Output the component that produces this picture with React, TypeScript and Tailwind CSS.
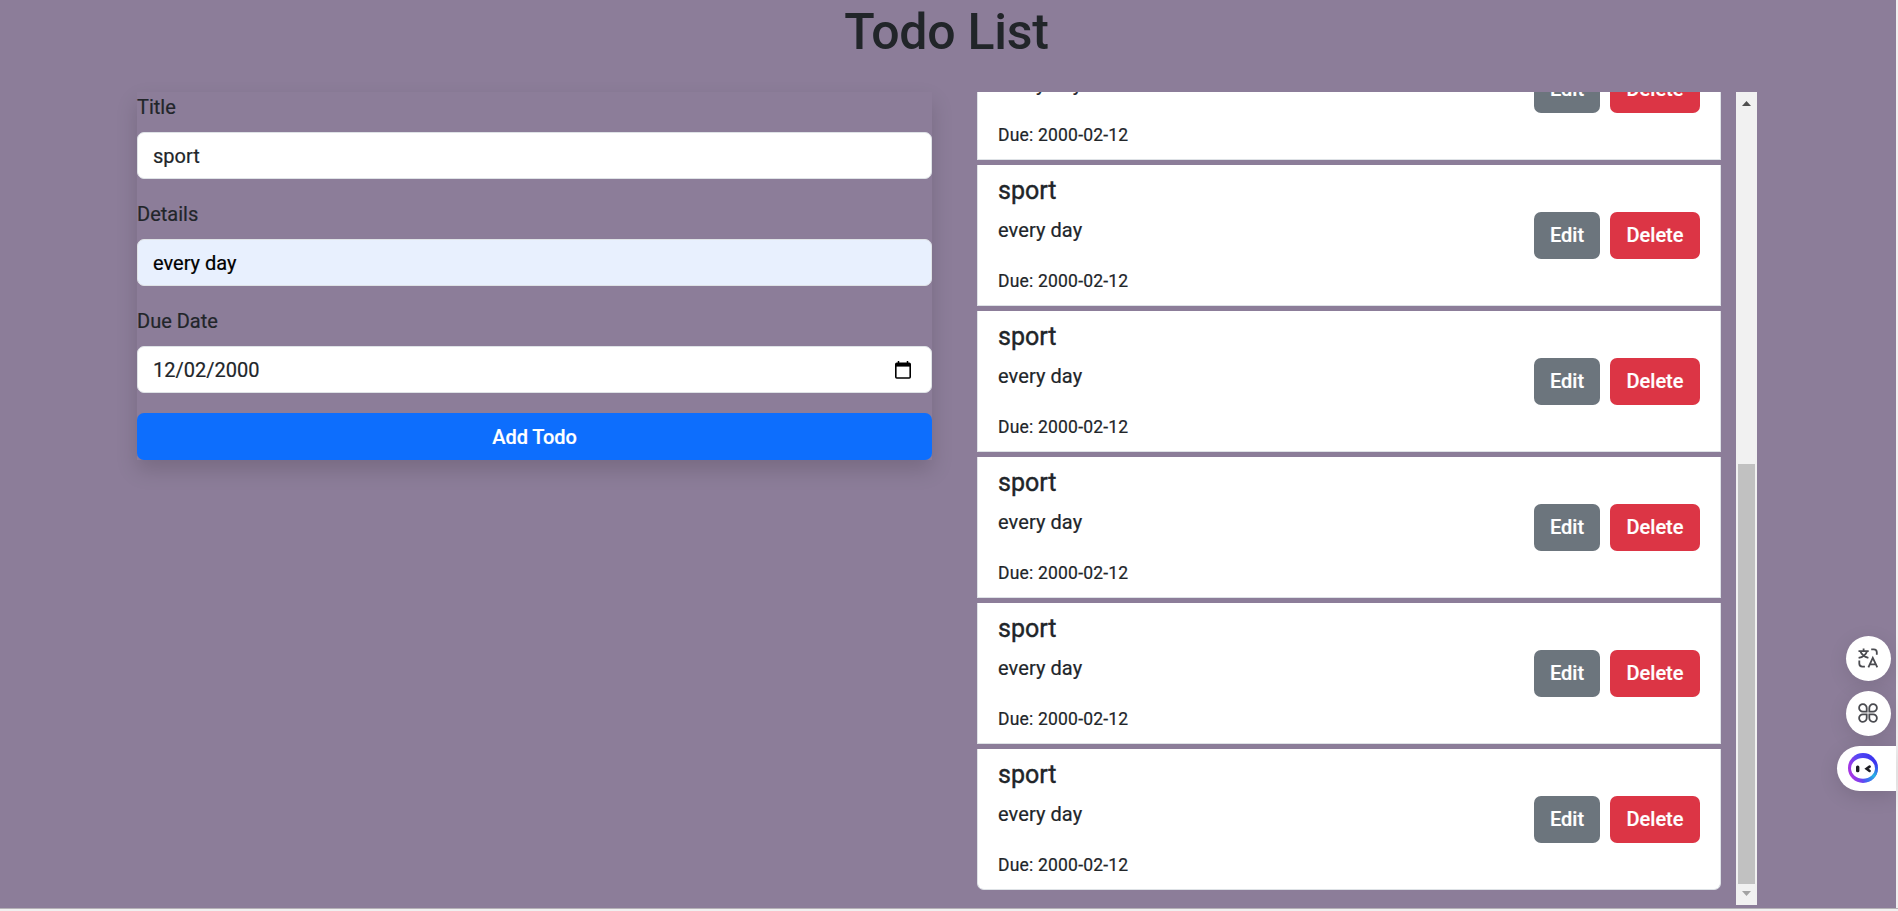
import React from "react";

const todos = Array.from({ length: 6 }, (_, id) => ({
  id,
  title: "sport",
  details: "every day",
  due: "2000-02-12",
}));

function Field({ label, value, tone, children }: { label: string; value: string; tone: string; children?: React.ReactNode }) {
  return (
    <div className="mb-5">
      <label className="mb-2.5 block leading-[30px]">{label}</label>
      <div className={`flex h-[47px] items-center justify-between rounded-[7px] border border-[#dee2e6] px-[15px] ${tone}`}>
        <span>{value}</span>
        {children}
      </div>
    </div>
  );
}

function CalendarIcon() {
  return (
    <svg className="mr-[5px] h-[18px] w-4" viewBox="0 0 16 18" fill="none">
      <path d="M3.5 0v3M12.5 0v3" stroke="#000" strokeWidth="1.5" />
      <rect x="0.8" y="2.3" width="14.4" height="14.7" rx="1" stroke="#000" strokeWidth="1.6" />
      <path d="M1 2h14v3.6H1z" fill="#000" />
    </svg>
  );
}

function TodoItem({ title, details, due }: { title: string; details: string; due: string }) {
  return (
    <li className="flex h-[141px] shrink-0 items-center justify-between border border-t-0 border-[#dee2e6] bg-white px-5 py-2.5 last:rounded-b-[7px]">
      <div>
        <h5 className="mb-[9px] pt-px text-[25px] leading-[30px] font-normal [-webkit-text-stroke:0.4px]">{title}</h5>
        <p className="mb-[21px] leading-[30px] tracking-[0.08px]">{details}</p>
        <p className="-mb-px text-[17.5px] leading-[30px] tracking-[0.2px]">Due: {due}</p>
      </div>
      <div className="flex gap-2.5">
        <button className="h-[47px] w-[66px] rounded-[7px] bg-[#6c757d] font-medium text-white">Edit</button>
        <button className="h-[47px] w-[90px] rounded-[7px] bg-[#dc3545] font-medium text-white">Delete</button>
      </div>
    </li>
  );
}

function ScrollBar() {
  return (
    <div className="flex h-[813px] w-[21px] flex-col items-center bg-[#f1f1f1]">
      <div className="flex h-[21px] items-center justify-center pt-[2px]">
        <svg className="h-[5px] w-[9px]" viewBox="0 0 9 5"><path d="M4.5 0 9 5H0z" fill="#505050" /></svg>
      </div>
      <div className="mt-[351px] h-[420px] w-[17px] bg-[#c1c1c1]" />
      <div className="flex h-[21px] items-center justify-center pb-[2px]">
        <svg className="h-[5px] w-[9px]" viewBox="0 0 9 5"><path d="M0 0h9L4.5 5z" fill="#a3a3a3" /></svg>
      </div>
    </div>
  );
}

function TranslateIcon() {
  return (
    <svg className="h-5 w-5" viewBox="0 0 20 20" fill="none" stroke="#4a4b50" strokeWidth="1.8">
      <path d="M0.5 3.2h10.2M5.6 0.5v2.7M2.4 3.4C3.8 6.9 6.4 8.9 10.4 9.9M8.9 3.4C7.8 6.9 5 9.1 0.6 9.9" />
      <path d="M13.2 1.3h2.6a3 3 0 0 1 3 3v2.5M1.3 12.6v3a3 3 0 0 0 3 3h2.6" />
      <path d="M10.4 19.4 14.8 9.9l4.5 9.5M12 16.3h5.6" />
    </svg>
  );
}

function CloverIcon() {
  return (
    <svg className="h-5 w-5" viewBox="0 0 20 20" fill="none" stroke="#4a4b50" strokeWidth="1.8">
      <path d="M8.7 8.7H5A3.8 3.8 0 1 1 8.7 5z" />
      <path d="M11.3 8.7V5A3.8 3.8 0 1 1 15 8.7z" />
      <path d="M8.7 11.3V15A3.8 3.8 0 1 1 5 11.3z" />
      <path d="M11.3 11.3H15A3.8 3.8 0 1 1 11.3 15z" />
    </svg>
  );
}

function BotIcon() {
  return (
    <svg className="h-[30px] w-[30px]" viewBox="0 0 30 30" fill="none">
      <defs>
        <linearGradient id="ring" x1="3" y1="20" x2="27" y2="12" gradientUnits="userSpaceOnUse">
          <stop stopColor="#a435e4" />
          <stop offset="0.45" stopColor="#5549f5" />
          <stop offset="1" stopColor="#3c35ee" />
        </linearGradient>
        <radialGradient id="glow" cx="26" cy="23" r="13" gradientUnits="userSpaceOnUse">
          <stop stopColor="#26bce0" />
          <stop offset="1" stopColor="#268ff0" stopOpacity="0" />
        </radialGradient>
      </defs>
      <circle cx="15" cy="15" r="15" fill="url(#ring)" />
      <circle cx="15" cy="15" r="15" fill="url(#glow)" />
      <ellipse cx="15" cy="15.3" rx="12" ry="10.4" fill="#fff" />
      <rect x="8" y="12.5" width="3.4" height="6.8" rx="1.5" fill="#1c1c22" />
      <path d="m21.6 13.6-3 2.2 3 2.2" stroke="#1c1c22" strokeWidth="2.6" strokeLinecap="round" />
    </svg>
  );
}

export default function App() {
  return (
    <div className="relative h-[911px] w-[1898px] overflow-hidden bg-[#f0f0f0] font-[Roboto,sans-serif] text-xl text-[#212529] [-webkit-text-stroke:0.2px]">
      <main className="h-[908px] w-[1896px] bg-[#8c7d99]">
        <h1 className="h-[92px] pt-[2px] pr-[3px] text-center text-[50px] leading-[60px] font-medium tracking-[-0.25px] [-webkit-text-stroke:0px]">Todo List</h1>
        <div className="flex items-start pl-[137px]">
          <form className="w-[795px] shadow-[0_10px_20px_rgba(0,0,0,0.15)]">
            <Field label="Title" value="sport" tone="bg-white" />
            <Field label="Details" value="every day" tone="bg-[#e8f0fe] text-black" />
            <Field label="Due Date" value="12/02/2000" tone="bg-white"><CalendarIcon /></Field>
            <button type="button" className="block h-[47px] w-full rounded-[7px] bg-[#0d6efd] font-medium tracking-[-0.08px] text-white">Add Todo</button>
          </form>
          <ul className="ml-[45px] flex h-[813px] w-[744px] flex-col justify-end gap-[5px] overflow-hidden pb-[15px]">
            {todos.map((todo) => <TodoItem key={todo.id} {...todo} />)}
          </ul>
          <div className="ml-[15px]"><ScrollBar /></div>
        </div>
      </main>
      <div className="h-px bg-[#b5b2b7]" />
      <div className="absolute top-[636px] right-[2px] flex flex-col items-end gap-2.5">
        <button className="mr-[5px] flex h-[45px] w-[45px] items-center justify-center rounded-full bg-white pr-[2px] pb-px shadow-[0_5px_20px_rgba(0,0,0,0.1)]"><TranslateIcon /></button>
        <button className="mr-[5px] flex h-[45px] w-[45px] items-center justify-center rounded-full bg-white pr-px pb-px shadow-[0_5px_20px_rgba(0,0,0,0.1)]"><CloverIcon /></button>
        <button className="flex h-[45px] w-[59px] items-center rounded-l-full bg-white pb-px pl-[11px] shadow-[0_5px_20px_rgba(0,0,0,0.12)]"><BotIcon /></button>
      </div>
    </div>
  );
}
